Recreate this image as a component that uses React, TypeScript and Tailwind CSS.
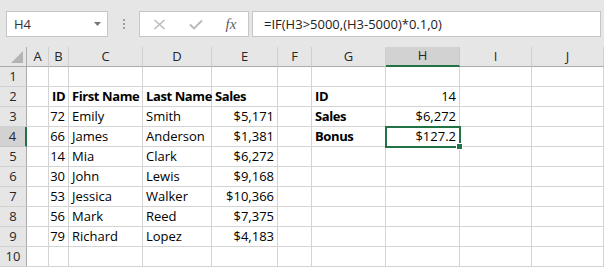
import React from "react";

const cols = ["A", "B", "C", "D", "E", "F", "G", "H", "I", "J"];

type Cell = { t: string; b?: boolean; r?: boolean };
const E: Cell = { t: "" };
const L = (t: string, b = false): Cell => ({ t, b });
const R = (t: string): Cell => ({ t, r: true });

const rows: Cell[][] = [
  [E, E, E, E, E, E, E, E, E, E],
  [E, L("ID", true), L("First Name", true), L("Last Name", true), L("Sales", true), E, L("ID", true), R("14"), E, E],
  [E, R("72"), L("Emily"), L("Smith"), R("$5,171"), E, L("Sales", true), R("$6,272"), E, E],
  [E, R("66"), L("James"), L("Anderson"), R("$1,381"), E, L("Bonus", true), R("$127.2"), E, E],
  [E, R("14"), L("Mia"), L("Clark"), R("$6,272"), E, E, E, E, E],
  [E, R("30"), L("John"), L("Lewis"), R("$9,168"), E, E, E, E, E],
  [E, R("53"), L("Jessica"), L("Walker"), R("$10,366"), E, E, E, E, E],
  [E, R("56"), L("Mark"), L("Reed"), R("$7,375"), E, E, E, E, E],
  [E, R("79"), L("Richard"), L("Lopez"), R("$4,183"), E, E, E, E, E],
  [E, E, E, E, E, E, E, E, E, E],
];

export default function App() {
  return (
    <div
      className="w-[604px] h-[267px] overflow-hidden bg-white text-black"
      style={{ fontFamily: '"Open Sans", "Liberation Sans", sans-serif' }}
    >
      {/* Toolbar */}
      <div className="h-[47px] bg-[#e6e6e6] flex items-start pt-[11px] pl-[6px]">
        <div className="w-[102px] h-[26px] bg-white border border-[#c6c6c6] flex items-center justify-between pl-[7px] pr-[6px]">
          <span className="text-[13px] text-[#333] leading-none">H4</span>
          <svg width="7" height="4" viewBox="0 0 7 4">
            <polygon points="0,0 7,0 3.5,4" fill="#777" />
          </svg>
        </div>
        <div className="w-[31px] h-[26px] flex flex-col items-center justify-center gap-[2px]">
          <div className="w-[2px] h-[2px] bg-[#a0a0a0]" />
          <div className="w-[2px] h-[2px] bg-[#a0a0a0]" />
          <div className="w-[2px] h-[2px] bg-[#a0a0a0]" />
        </div>
        <div className="w-[110px] h-[26px] bg-white border border-[#c6c6c6] flex items-center">
          <div className="w-[37px] flex justify-center pl-[2px]">
            <svg width="13" height="11" viewBox="0 0 13 11">
              <path d="M1.5 1 L11.5 10 M11.5 1 L1.5 10" stroke="#b8b8b8" strokeWidth="1.4" fill="none" />
            </svg>
          </div>
          <div className="w-[37px] flex justify-center">
            <svg width="14" height="11" viewBox="0 0 14 11">
              <path d="M1 5.5 L5 9.5 L13 1.5" stroke="#b8b8b8" strokeWidth="1.8" fill="none" />
            </svg>
          </div>
          <div className="w-[34px] flex justify-center">
            <span
              className="italic text-[15px] leading-none text-[#606060]"
              style={{ fontFamily: '"Liberation Serif", serif' }}
            >
              fx
            </span>
          </div>
        </div>
        <div className="ml-[3px] w-[349px] h-[26px] bg-white border border-[#c6c6c6] flex items-center pl-[11px]">
          <span className="text-[13px] text-[#222] leading-none">=IF(H3&gt;5000,(H3-5000)*0.1,0)</span>
        </div>
      </div>

      {/* Grid */}
      <div className="grid grid-cols-[27px_22px_20px_74px_69px_66px_34px_74px_74px_72px_72px] grid-rows-[repeat(11,20px)] text-[13px]">
        {/* header row */}
        <div className="relative bg-[#e6e6e6] border-r border-b border-[#ababab]">
          <svg className="absolute left-[11px] top-[4px]" width="12" height="12" viewBox="0 0 12 12">
            <polygon points="12,0 12,12 0,12" fill="#b4b4b4" />
          </svg>
        </div>
        {cols.map((c) => (
          <div
            key={c}
            className={
              c === "H"
                ? "bg-[#d2d2d2] border-r border-[#c6c6c6] border-b-2 border-b-[#217346] flex items-center justify-center text-[#262626]"
                : "bg-[#e6e6e6] border-r border-b border-r-[#d0d0d0] border-b-[#ababab] flex items-center justify-center text-[#262626]"
            }
          >
            {c}
          </div>
        ))}
        {rows.map((row, ri) => (
          <React.Fragment key={ri}>
            <div
              className={
                ri === 3
                  ? "bg-[#d2d2d2] border-r-2 border-r-[#217346] border-b border-b-[#c6c6c6] flex items-center justify-center text-[#262626]"
                  : "bg-[#e6e6e6] border-r border-b border-r-[#ababab] border-b-[#d0d0d0] flex items-center justify-center text-[#262626]"
              }
            >
              {ri + 1}
            </div>
            {row.map((cell, ci) => {
              const selected = ri === 3 && ci === 7;
              return (
                <div
                  key={ci}
                  className={
                    "relative border-r border-b border-[#d4d4d4] flex items-end pb-[1px] px-[3px] whitespace-nowrap leading-[17px] " +
                    (cell.r ? "justify-end " : "justify-start ") +
                    (cell.b ? "font-bold tracking-[-0.4px]" : "")
                  }
                >
                  {cell.t}
                  {selected && (
                    <>
                      <div className="absolute left-[-1px] top-[-1px] right-[-2px] bottom-[-2px] border-2 border-[#217346] z-10" />
                      <div className="absolute right-[-4px] bottom-[-4px] w-[7px] h-[7px] bg-[#217346] border border-white z-20" />
                    </>
                  )}
                </div>
              );
            })}
          </React.Fragment>
        ))}
      </div>
    </div>
  );
}
